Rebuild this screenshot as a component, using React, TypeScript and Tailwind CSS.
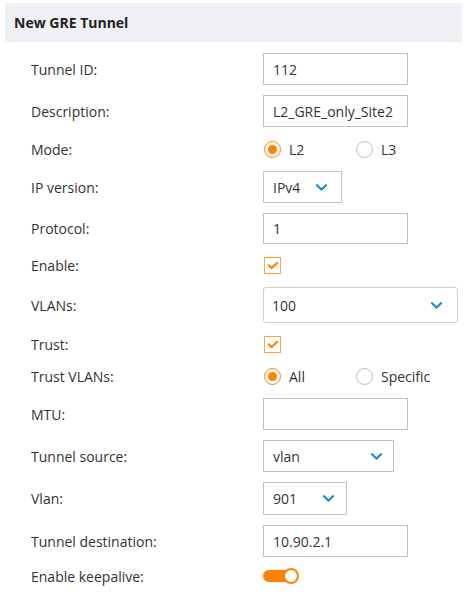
import React from "react";

const ORANGE = "#ff8300";

function Chevron() {
  return (
    <svg width="11" height="7" viewBox="0 0 11 7" fill="none">
      <path d="M1 1.2 L5.5 5.5 L10 1.2" stroke="#1a87d6" strokeWidth="2" strokeLinecap="square" />
    </svg>
  );
}

function TextInput({ value, w }: { value: string; w: string }) {
  return (
    <div className={`${w} h-full border border-[#bfbfbf] bg-white flex items-center pl-[9px] text-[14px] text-[#333]`}>
      {value}
    </div>
  );
}

function Select({ value, w, pr }: { value: string; w: string; pr: string }) {
  return (
    <div className={`${w} h-full border border-[#c4c4c4] bg-white flex items-center justify-between pl-[9px] ${pr} text-[14px] text-[#333]`}>
      <span>{value}</span>
      <Chevron />
    </div>
  );
}

function Radio({ checked, label }: { checked: boolean; label: string }) {
  return (
    <div className="flex items-center w-[92px]">
      <div
        className={`ml-[1px] w-[17px] h-[17px] rounded-full border flex items-center justify-center bg-white ${
          checked ? "border-[#ff8300]" : "border-[#bdbdbd]"
        }`}
      >
        {checked && <div className="w-[9px] h-[9px] rounded-full bg-[#ff8300]" />}
      </div>
      <span className="ml-[8px] text-[14px] text-[#333]">{label}</span>
    </div>
  );
}

function Checkbox() {
  return (
    <div className="ml-[1px] w-[17px] h-[17px] border border-[#ffa24a] bg-white flex items-center justify-center">
      <svg width="12" height="9" viewBox="0 0 12 9" fill="none">
        <path d="M1.2 3.8 L4.6 7 L10.8 1.2" stroke={ORANGE} strokeWidth="2.2" />
      </svg>
    </div>
  );
}

function Toggle() {
  return (
    <div className="relative w-[36px] h-[16px] flex items-center">
      <div className="w-[34px] h-[12px] rounded-full bg-[#ff8300]" />
      <div className="absolute right-0 top-0 w-[16px] h-[16px] rounded-full bg-white border-2 border-[#ff8300]" />
    </div>
  );
}

function Row({ label, mt, h, children }: { label: string; mt: string; h: string; children: React.ReactNode }) {
  return (
    <div className={`flex items-center ${mt} ${h}`}>
      <div className="w-[263px] shrink-0 pl-[31px] text-[14px] text-[#333]">{label}</div>
      <div className="flex items-center h-full">{children}</div>
    </div>
  );
}

export default function App() {
  return (
    <div
      className="w-[469px] h-[596px] bg-white overflow-hidden"
      style={{ fontFamily: '"Open Sans", "Noto Sans", sans-serif' }}
    >
      <div className="ml-[5px] mt-[3px] w-[457px] h-[39px] bg-[#eef0f3] flex items-center pl-[9px]">
        <span className="text-[14px] font-bold text-[#222]">New GRE Tunnel</span>
      </div>

      <Row label="Tunnel ID:" mt="mt-[11px]" h="h-[32px]">
        <TextInput value="112" w="w-[145px]" />
      </Row>
      <Row label="Description:" mt="mt-[10px]" h="h-[32px]">
        <TextInput value="L2_GRE_only_Site2" w="w-[145px]" />
      </Row>
      <Row label="Mode:" mt="mt-[13px]" h="h-[18px]">
        <Radio checked label="L2" />
        <Radio checked={false} label="L3" />
      </Row>
      <Row label="IP version:" mt="mt-[13px]" h="h-[32px]">
        <Select value="IPv4" w="w-[79px]" pr="pr-[14px]" />
      </Row>
      <Row label="Protocol:" mt="mt-[10px]" h="h-[31px]">
        <TextInput value="1" w="w-[145px]" />
      </Row>
      <Row label="Enable:" mt="mt-[12px]" h="h-[18px]">
        <Checkbox />
      </Row>
      <Row label="VLANs:" mt="mt-[13px]" h="h-[36px]">
        <div className="w-[195px] h-full border border-[#cfcfcf] rounded-[3px] bg-white flex items-center justify-between pl-[8px] pr-[15px] text-[14px] text-[#333]">
          <span>100</span>
          <Chevron />
        </div>
      </Row>
      <Row label="Trust:" mt="mt-[12px]" h="h-[18px]">
        <Checkbox />
      </Row>
      <Row label="Trust VLANs:" mt="mt-[14px]" h="h-[18px]">
        <Radio checked label="All" />
        <Radio checked={false} label="Specific" />
      </Row>
      <Row label="MTU:" mt="mt-[13px]" h="h-[32px]">
        <TextInput value="" w="w-[145px]" />
      </Row>
      <Row label="Tunnel source:" mt="mt-[10px]" h="h-[32px]">
        <Select value="vlan" w="w-[131px]" pr="pr-[11px]" />
      </Row>
      <Row label="Vlan:" mt="mt-[10px]" h="h-[33px]">
        <Select value="901" w="w-[84px]" pr="pr-[12px]" />
      </Row>
      <Row label="Tunnel destination:" mt="mt-[10px]" h="h-[32px]">
        <TextInput value="10.90.2.1" w="w-[145px]" />
      </Row>
      <Row label="Enable keepalive:" mt="mt-[11px]" h="h-[16px]">
        <Toggle />
      </Row>
    </div>
  );
}
